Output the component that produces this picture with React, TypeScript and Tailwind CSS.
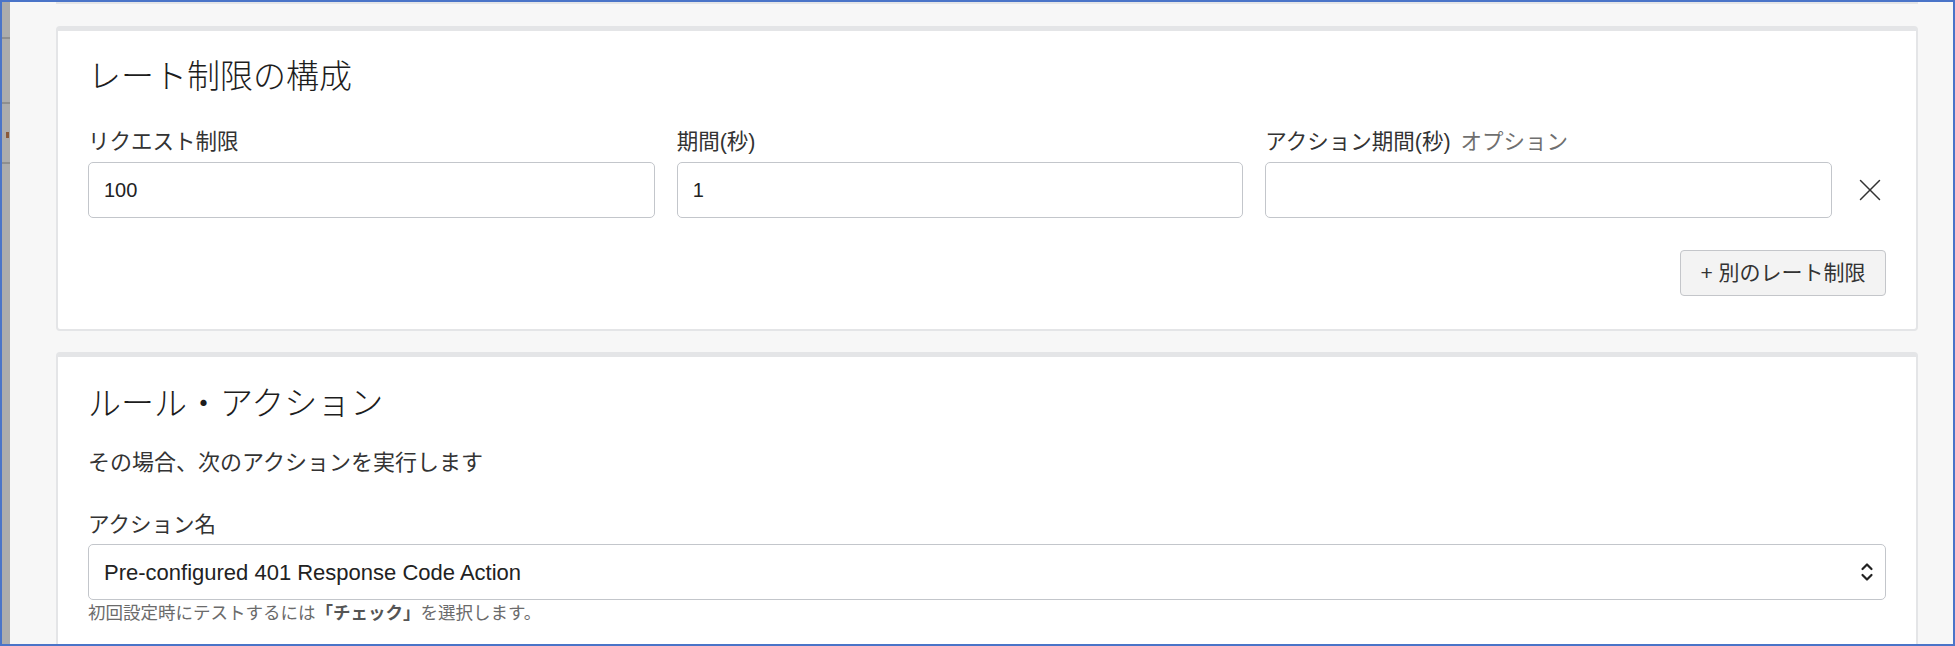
const jp = "font-['Liberation_Sans','Noto_Sans_CJK_JP',sans-serif]";

function Card({ children, className = "" }: { children: React.ReactNode; className?: string }) {
  return (
    <div
      className={
        "bg-white border-x-2 border-b-2 border-t-[5px] border-[#e4e5e7] rounded-[4px] px-[30px] " + className
      }
    >
      {children}
    </div>
  );
}

function Field({ label, value, optional }: { label: string; value: string; optional?: boolean }) {
  return (
    <div className="flex flex-col">
      <div className="text-[21.5px] leading-[24px] text-[#333333] flex gap-[10px]">
        <span>{label}</span>
        {optional && <span className="text-[#6f6f6f]">オプション</span>}
      </div>
      <div className="mt-[8px] h-[56px] rounded-[5px] border-[1.5px] border-[#c3c6cb] bg-white px-[15px] flex items-center text-[20px] text-[#222222]">
        {value}
      </div>
    </div>
  );
}

export default function App() {
  return (
    <div className={"w-[1955px] h-[646px] overflow-hidden border-2 border-[#4a74c8] bg-[#f7f7f7] flex " + jp}>
      {/* left edge of the window behind */}
      <div className="w-[8px] bg-[#acacac] flex flex-col">
        <div className="h-[35px]" />
        <div className="h-[2px] bg-[#8f8f8f]" />
        <div className="h-[63px]" />
        <div className="h-[2px] bg-[#8f8f8f]" />
        <div className="h-[28px]" />
        <div className="h-[6px] w-[3px] ml-[4px] bg-[#8a5a3a]" />
        <div className="h-[24px]" />
        <div className="h-[2px] bg-[#8f8f8f]" />
      </div>

      <div className="flex-1 pl-[46px] pr-[35px] flex flex-col">
        {/* bottom of the previous card */}
        <div className="h-[3px] bg-white border-b-2 border-[#e4e5e7]" />

        <Card className="mt-[22px] pt-[26px] pb-[33px]">
          <h2 className="text-[33px] leading-[40px] text-[#1d1d1d] font-light">レート制限の構成</h2>
          <div className="mt-[33px] grid grid-cols-[1fr_1fr_1fr_32px] gap-x-[22px] items-end">
            <Field label="リクエスト制限" value="100" />
            <Field label="期間(秒)" value="1" />
            <Field label="アクション期間(秒)" value="" optional />
            <div className="h-[56px] flex items-center justify-center">
              <svg width="22" height="22" viewBox="0 0 22 22" fill="none" stroke="#333333" strokeWidth="1.5" strokeLinecap="round">
                <line x1="1.5" y1="1.5" x2="20.5" y2="20.5" />
                <line x1="20.5" y1="1.5" x2="1.5" y2="20.5" />
              </svg>
            </div>
          </div>
          <div className="mt-[32px] flex justify-end">
            <button className="h-[46px] w-[206px] rounded-[4px] border-[1.5px] border-[#c4c6ca] bg-[#f3f3f3] text-[21px] text-[#333333]">
              + 別のレート制限
            </button>
          </div>
        </Card>

        <Card className="mt-[21px] pt-[27px] pb-[60px]">
          <h2 className="text-[33px] leading-[40px] text-[#1d1d1d] font-light">ルール・アクション</h2>
          <p className="mt-[26px] text-[22px] leading-[26px] text-[#333333]">その場合、次のアクションを実行します</p>
          <div className="mt-[37px] text-[21.5px] leading-[24px] text-[#333333]">アクション名</div>
          <div className="mt-[7px] h-[56px] rounded-[5px] border-[1.5px] border-[#c3c6cb] bg-white pl-[15px] pr-[11px] flex items-center justify-between text-[22px] text-[#222222]">
            <span>Pre-configured 401 Response Code Action</span>
            <svg width="14" height="24" viewBox="0 0 14 24" fill="none" stroke="#222222" strokeWidth="2.2" strokeLinecap="round" strokeLinejoin="round">
              <polyline points="2.5,9 7,4.5 11.5,9" />
              <polyline points="2.5,15 7,19.5 11.5,15" />
            </svg>
          </div>
          <div className="mt-[2px] text-[17.5px] leading-[22px] text-[#6b6b6b]">
            初回設定時にテストするには<span className="font-bold text-[#555555]">「チェック」</span>を選択します。
          </div>
        </Card>
      </div>
    </div>
  );
}
